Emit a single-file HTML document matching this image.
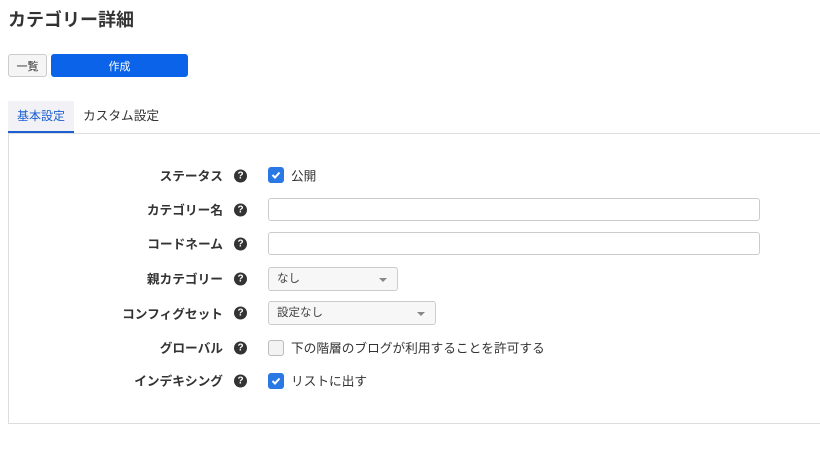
<!DOCTYPE html>
<html><head><meta charset="utf-8"><style>
body{margin:0;width:820px;height:462px;background:#fff;font-family:"Liberation Sans","Noto Sans CJK JP",sans-serif;color:#333;position:relative;overflow:hidden}
.a{position:absolute}
h1{position:absolute;left:8px;top:6px;margin:0;font-size:18px;font-weight:bold;color:#333}
.btn{position:absolute;top:54px;height:23px;box-sizing:border-box;border-radius:3px;font-size:11px;display:flex;align-items:center;justify-content:center}
.lbl{position:absolute;right:597px;font-size:12.7px;font-weight:bold;color:#333;transform:translateY(-50%);white-space:nowrap}
.q{position:absolute;left:234px;width:13px;height:13px;border-radius:50%;background:#333;color:#fff;font-size:10px;font-weight:bold;text-align:center;line-height:13px;transform:translateY(-50%)}
.cb{position:absolute;left:268px;width:16px;height:16px;border-radius:3px;box-sizing:border-box;transform:translateY(-50%)}
.on{background:#2a78e4}
.off{border:1px solid #bbb;background:#f3f3f3}
.ct{position:absolute;left:291px;font-size:12.7px;transform:translateY(-50%);white-space:nowrap}
.in{position:absolute;left:268px;width:492px;height:23px;box-sizing:border-box;border:1px solid #ccc;border-radius:3px;background:#fff}
.sel{position:absolute;left:268px;height:24px;box-sizing:border-box;border:1px solid #ccc;border-radius:3px;background:#f7f7f7;font-size:11.5px;padding-left:8px;line-height:22px;color:#444}
.sel:after{content:"";position:absolute;right:10px;top:10px;border:4px solid transparent;border-top:4px solid #888;border-bottom:0}
</style></head><body>
<h1>カテゴリー詳細</h1>
<div class="btn" style="left:8px;width:39px;border:1px solid #ccc;background:#f5f5f5;color:#333">一覧</div>
<div class="btn" style="left:51px;width:137px;background:#0a63e8;color:#fff">作成</div>
<div class="a" style="left:8px;top:101px;width:66px;height:32px;background:#f1f1f6;border-bottom:2px solid #1b5fd1;box-sizing:border-box;font-size:12px;color:#1b5fd1;line-height:30px;text-align:center">基本設定</div>
<div class="a" style="left:83px;top:101px;font-size:12.7px;line-height:30px;color:#333">カスタム設定</div>
<div class="a" style="left:8px;top:133px;width:830px;height:291px;border:1px solid #ddd;box-sizing:border-box"></div>

<div class="lbl" style="top:175px">ステータス</div><div class="q" style="top:176px">?</div>
<div class="cb on" style="top:175px"><svg width="16" height="16"><path d="M4.5 8l2.5 2.5 4.5-5" stroke="#fff" stroke-width="2" fill="none"/></svg></div><div class="ct" style="top:175px">公開</div>

<div class="lbl" style="top:209px">カテゴリー名</div><div class="q" style="top:210px">?</div>
<div class="in" style="top:198px"></div>

<div class="lbl" style="top:243px">コードネーム</div><div class="q" style="top:244px">?</div>
<div class="in" style="top:232px"></div>

<div class="lbl" style="top:278px">親カテゴリー</div><div class="q" style="top:279px">?</div>
<div class="sel" style="top:267px;width:130px">なし</div>

<div class="lbl" style="top:313px">コンフィグセット</div><div class="q" style="top:313px">?</div>
<div class="sel" style="top:301px;width:168px">設定なし</div>

<div class="lbl" style="top:347px">グローバル</div><div class="q" style="top:348px">?</div>
<div class="cb off" style="top:348px"></div><div class="ct" style="top:347px">下の階層のブログが利用することを許可する</div>

<div class="lbl" style="top:380px">インデキシング</div><div class="q" style="top:381px">?</div>
<div class="cb on" style="top:381px"><svg width="16" height="16"><path d="M4.5 8l2.5 2.5 4.5-5" stroke="#fff" stroke-width="2" fill="none"/></svg></div><div class="ct" style="top:380px">リストに出す</div>
</body></html>
